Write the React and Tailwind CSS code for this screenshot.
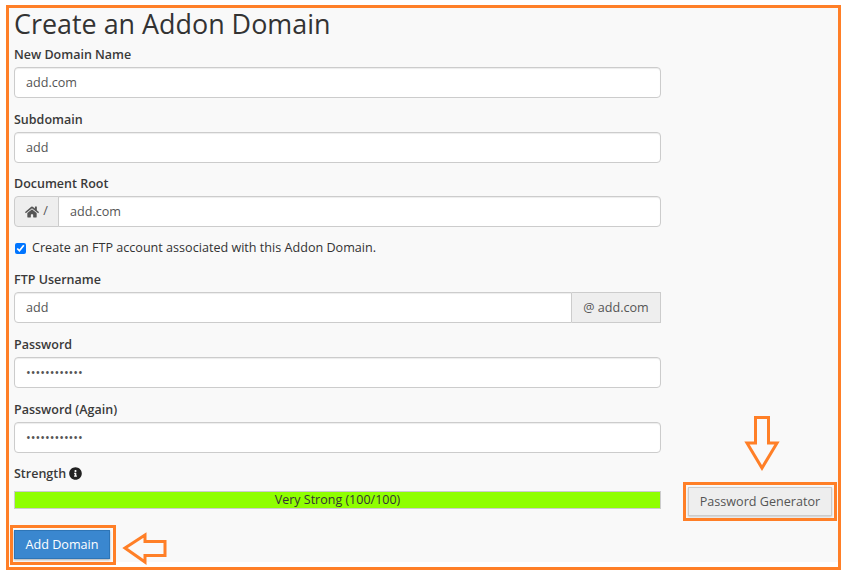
import React from 'react'
import { FaHome, FaInfoCircle } from 'react-icons/fa'

const inputCls = 'block w-full min-w-0 h-[31px] px-[11px] pb-[1px] bg-white border border-[#ccc] text-[12.6px] text-[#555] outline-none shadow-[inset_0_1px_1px_rgba(0,0,0,0.075)]'

const Label = ({ children }) => (
    <label className='block h-5 mb-[3px] leading-[21px] text-[12.5px] font-semibold text-[#3a3a3a]'>{children}</label>
)

const Field = ({ label, value, type = 'text', className }) => (
    <div className={className}>
        <Label>{label}</Label>
        <input type={type} value={value} readOnly className={`${inputCls} rounded`} />
    </div>
)

const Highlight = ({ className }) => (
    <span className={`absolute border-[3px] border-[#ff7f27] pointer-events-none ${className}`} />
)

const App = () => {
    return (
        <div className="h-[578px] w-[849px] bg-white pl-[6px] pt-[5px] font-['Open_Sans',sans-serif]">
            <div className='w-[835px] h-[565px] border-[3px] border-[#ff7f27] bg-white'>
                <div className='h-[554px] bg-[#f9f9f9] pl-[5px]'>
                    <h1 className='h-9 leading-[31px] text-[26.9px] font-normal text-[#333]'>Create an Addon Domain</h1>

                    <div className='w-[647px]'>
                        <Field className='mb-[11px]' label='New Domain Name' value='add.com' />
                        <Field className='mb-[10px]' label='Subdomain' value='add' />

                        <div className='mb-[11px]'>
                            <Label>Document Root</Label>
                            <div className='flex h-[31px]'>
                                <span className='flex w-[45px] shrink-0 items-center justify-center gap-[4px] rounded-l border border-[#ccc] bg-[#eee] text-[12.6px] text-[#555]'>
                                    <FaHome className='text-[14px]' />
                                    /
                                </span>
                                <input value='add.com' readOnly className={`${inputCls} -ml-px rounded-r`} />
                            </div>
                        </div>

                        <div className='mb-[11px] flex h-5 items-center'>
                            <input type='checkbox' checked readOnly className='ml-[0.5px] h-[11px] w-[11px] accent-[#0075ff]' />
                            <span className='ml-[6.5px] text-[12.6px] text-[#333]'>Create an FTP account associated with this Addon Domain.</span>
                        </div>

                        <div className='mb-[11px]'>
                            <Label>FTP Username</Label>
                            <div className='flex h-[31px]'>
                                <input value='add' readOnly className={`${inputCls} rounded-l`} />
                                <span className='flex w-[89px] shrink-0 items-center justify-center border border-l-0 border-[#ccc] bg-[#eee] pt-[2px] text-[12.6px] text-[#555]'>@ add.com</span>
                            </div>
                        </div>

                        <Field className='mb-[11px]' label='Password' value='123456789012' type='password' />
                        <Field className='mb-[10px]' label='Password (Again)' value='123456789012' type='password' />

                        <div className='flex h-5 items-center gap-[3px] pt-[2px] text-[12.5px] font-semibold text-[#3a3a3a]'>
                            Strength
                            <FaInfoCircle className='-mt-[2px] text-[13px] text-[#222]' />
                        </div>
                    </div>

                    <div className='mt-[8px] flex h-[18px] items-center gap-[27px]'>
                        <div className='h-[18px] w-[647px] shrink-0 border border-[#ccc] bg-[#8fff00] text-center text-[12.5px] leading-4 text-[#333]'>
                            Very Strong (100/100)
                        </div>
                        <button className='relative mt-[3px] h-[29px] w-[144px] shrink-0 border border-[#ccc] bg-[#eee] pt-[2px] text-[12.6px] text-[#555] shadow-[0_1px_2px_rgba(0,0,0,0.2)]'>
                            Password Generator
                            <Highlight className='-inset-[6px]' />
                            <svg className='absolute left-[55px] top-[-72px] overflow-visible' width='36' height='56' viewBox='0 0 36 56' fill='none'>
                                <polygon points='11.5,1.5 24.5,1.5 24.5,27 33,27 18,52 3,27 11.5,27' stroke='#ff7f27' strokeWidth='3' />
                            </svg>
                        </button>
                    </div>

                    <button className='relative mt-[21px] block h-[29px] w-[96px] border border-[#2e75b6] bg-[#3a87cf] pt-[2px] text-[12.6px] text-white shadow-[0_1px_2px_rgba(0,0,0,0.3)]'>
                        Add Domain
                        <Highlight className='-left-[5px] -right-[7px] -top-[6px] -bottom-[7px]' />
                        <svg className='absolute left-[107px] top-[1px] overflow-visible' width='46' height='32' viewBox='0 0 46 32' fill='none'>
                            <polygon points='3,16 23,3 23,9.5 43,9.5 43,23.5 23,23.5 23,30' stroke='#ff7f27' strokeWidth='3' />
                        </svg>
                    </button>
                </div>
            </div>
        </div>
    )
}

export default App
